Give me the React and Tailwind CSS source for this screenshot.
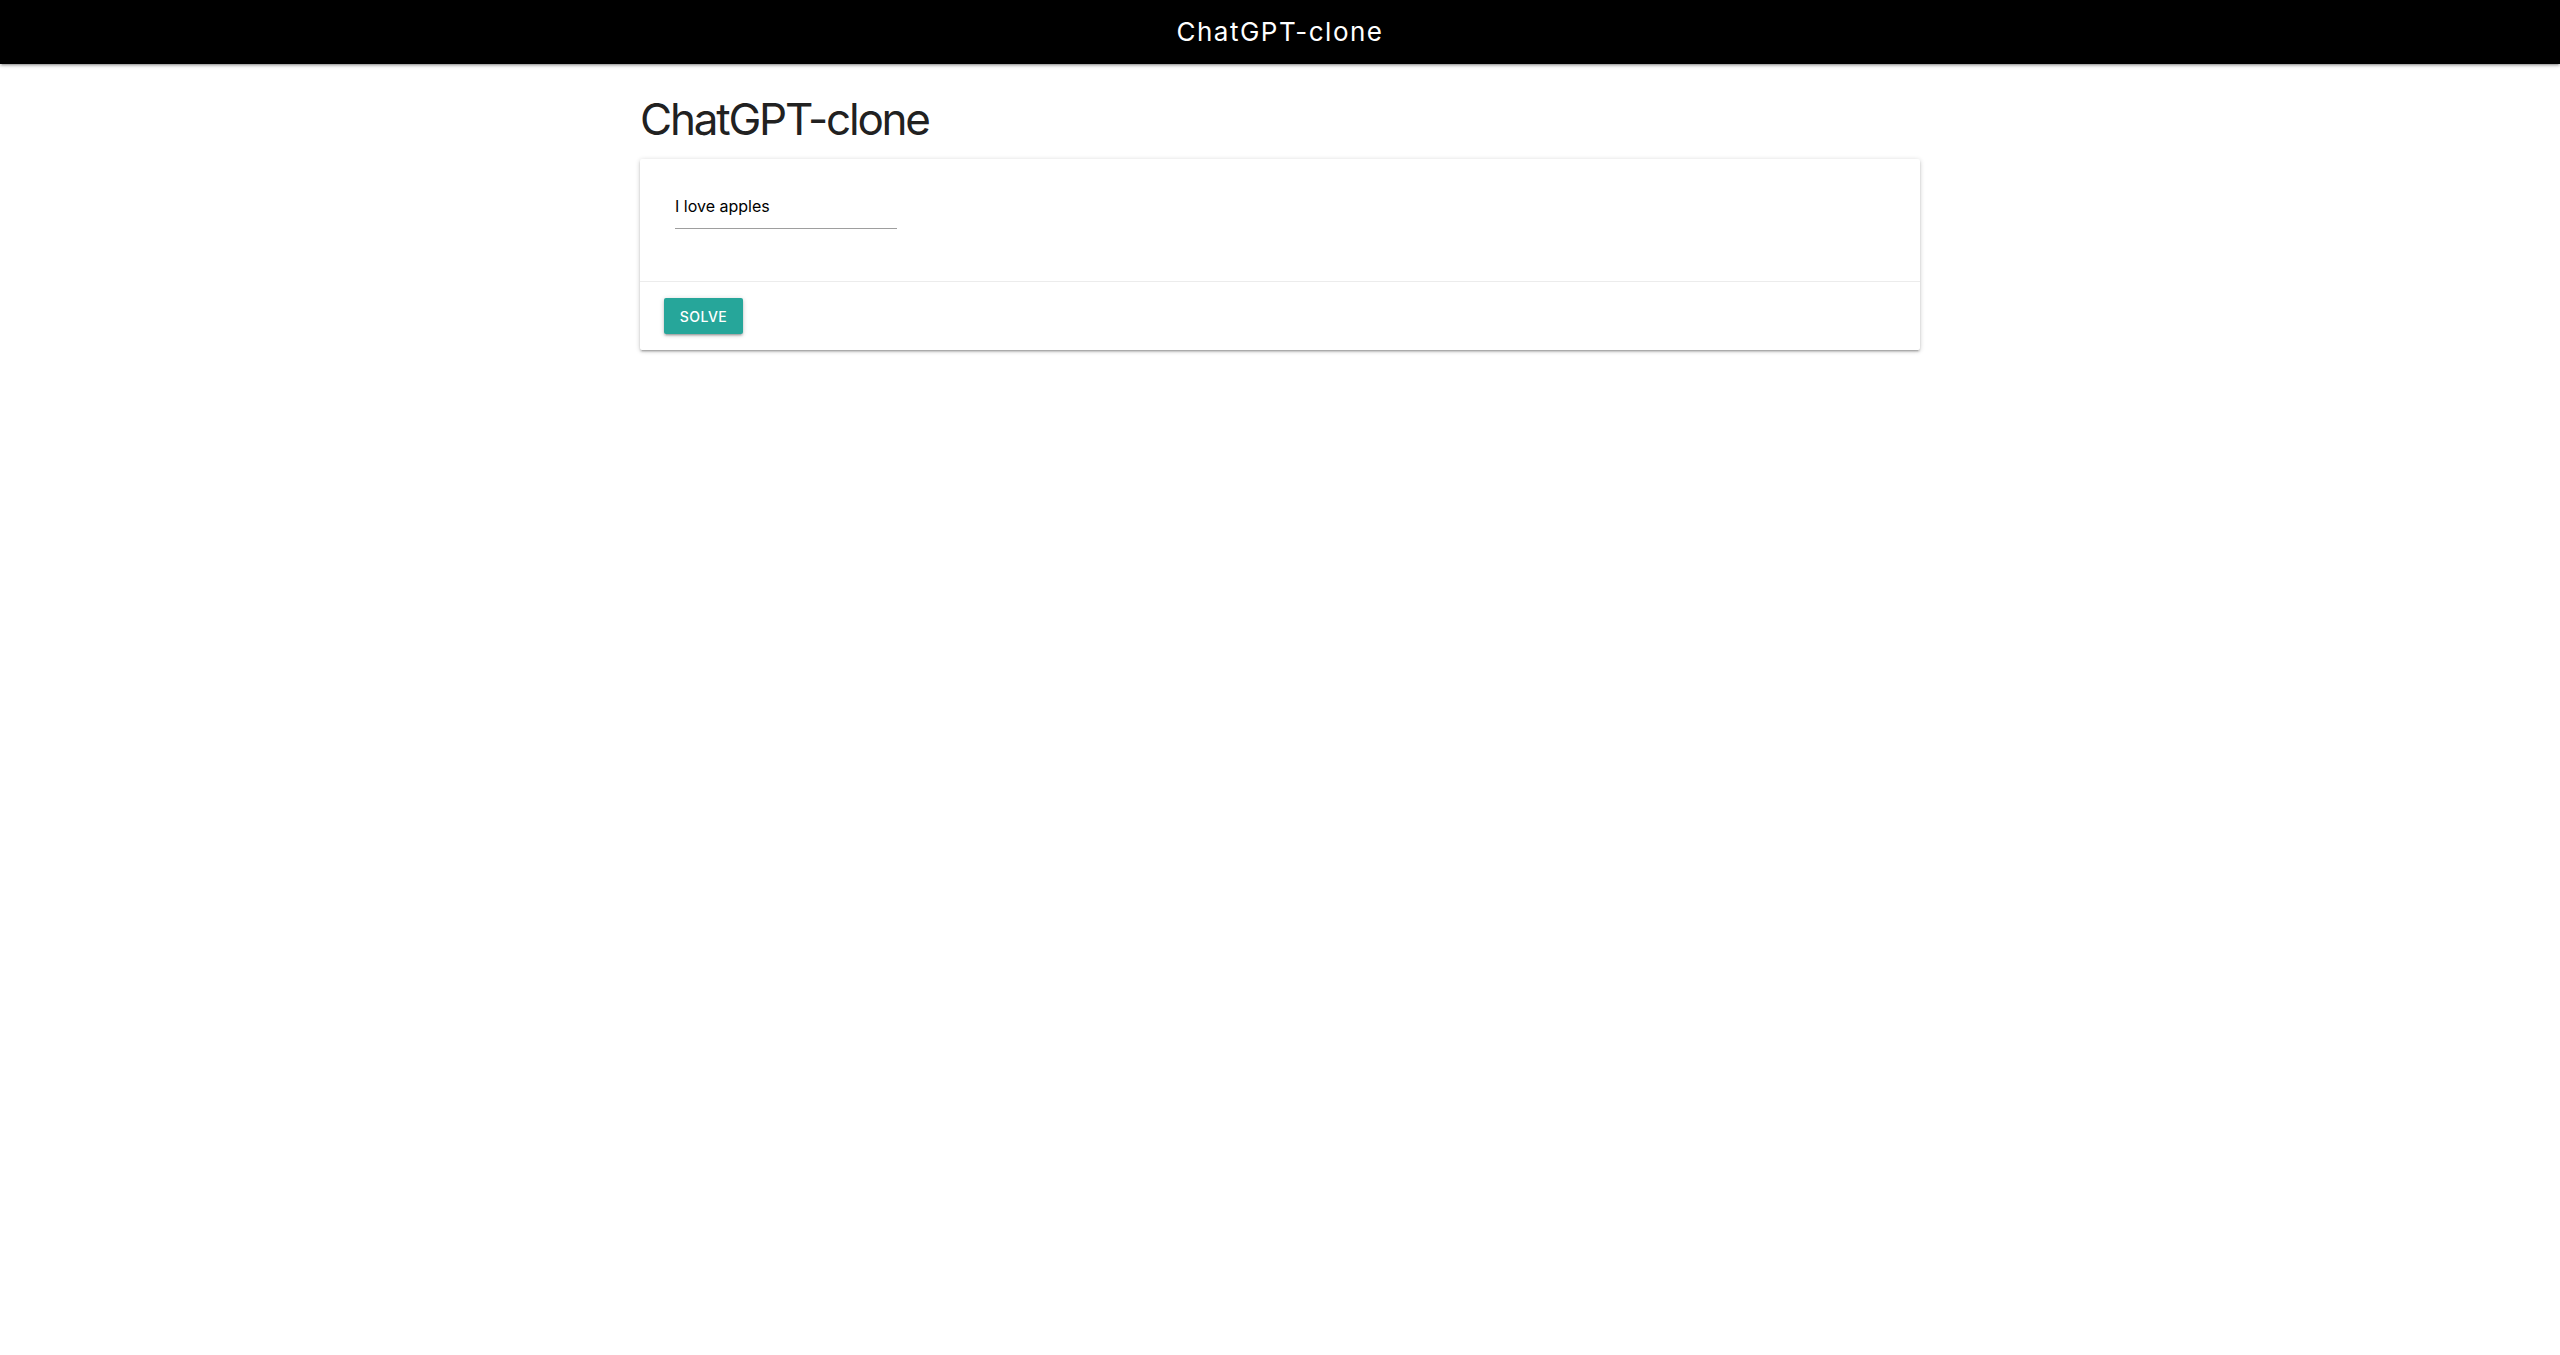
export default function App() {
  return (
    <div className="min-h-screen bg-white" style={{ fontFamily: 'Inter, "Noto Sans", sans-serif' }}>
      <nav className="h-[64px] bg-black flex items-center justify-center shadow-[0_2px_2px_0_rgba(0,0,0,0.14),0_3px_1px_-2px_rgba(0,0,0,0.12),0_1px_5px_0_rgba(0,0,0,0.2)] relative z-10">
        <span className="text-white text-[26px] leading-none tracking-[1.5px]">ChatGPT-clone</span>
      </nav>
      <main className="w-[1280px] mx-auto">
        <h3 className="mt-[31px] mb-[16px] text-[44px] leading-[48px] font-normal text-[#212121] tracking-[-2.2px]">
          ChatGPT-clone
        </h3>
        <div className="bg-white rounded-[2px] shadow-[0_2px_2px_0_rgba(0,0,0,0.14),0_3px_1px_-2px_rgba(0,0,0,0.12),0_1px_5px_0_rgba(0,0,0,0.2)]">
          <div className="pt-[24px] pb-[52px] px-[35px]">
            <div className="w-[222px] h-[46px] border-b border-[#9e9e9e] flex items-center text-[16px] text-black">
              I love apples
            </div>
          </div>
          <div className="border-t border-[rgba(160,160,160,0.2)] px-[24px] py-[16px] flex">
            <button className="h-[36px] w-[79px] bg-[#26a69a] text-white text-[14px] uppercase tracking-[0.5px] rounded-[2px] font-medium shadow-[0_2px_2px_0_rgba(0,0,0,0.14),0_3px_1px_-2px_rgba(0,0,0,0.12),0_1px_5px_0_rgba(0,0,0,0.2)]">
              Solve
            </button>
          </div>
        </div>
      </main>
    </div>
  );
}
